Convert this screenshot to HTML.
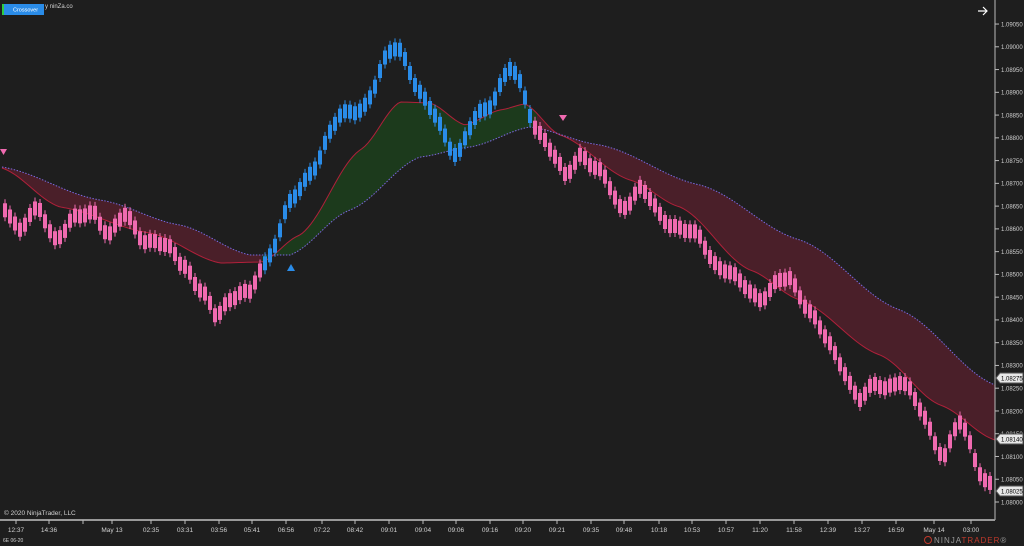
<!DOCTYPE html><html><head><style>
body{margin:0;background:#1e1e1e;width:1024px;height:546px;overflow:hidden;font-family:"Liberation Sans",sans-serif}
svg{position:absolute;left:0;top:0}
text{font-family:"Liberation Sans",sans-serif;font-size:6.5px;fill:#d0d0d0}
</style></head><body>
<svg id="s" width="1024" height="546" xmlns="http://www.w3.org/2000/svg">
<rect width="1024" height="546" fill="#1e1e1e"/>
<defs>
<clipPath id="g"><rect x="262" y="0" width="275" height="520"/></clipPath>
</defs>
<g id="bands"></g>
<g id="bars"></g>
<polygon points="0,149 7,149 3.5,155" fill="#f06ab0"/>
<polygon points="287,271 295,271 291,264" fill="#2a8ce8"/>
<polygon points="559,115 567,115 563,121" fill="#f06ab0"/>
<line x1="995" y1="0" x2="995" y2="520" stroke="#bbb" stroke-width="1"/>
<line x1="0" y1="520" x2="995" y2="520" stroke="#999" stroke-width="2"/>
<g id="axis"></g>
<rect x="2" y="4" width="2" height="11" fill="#2ecc40"/>
<rect x="4" y="4" width="40" height="11" fill="#2a8ce8"/>
<text x="13" y="11.5" style="font-size:5.5px;fill:#fff">Crossover</text>
<text x="45" y="8" style="font-size:6px">y ninZa.co</text>
<text x="4" y="515" style="font-size:6.5px">© 2020 NinjaTrader, LLC</text>
<text x="3" y="542" style="font-size:5px">6E 06-20</text>
<text x="934" y="543" style="font-size:8px;fill:#999;letter-spacing:1px">NINJA<tspan fill="#c0392b">TRADER</tspan>®</text>
<circle cx="928" cy="540" r="3.5" fill="none" stroke="#c0392b" stroke-width="1"/>
<path d="M978 11 H987 M983 7 L987 11 L983 15" stroke="#fff" stroke-width="1.2" fill="none"/>
</svg>
<script>
var NS="http://www.w3.org/2000/svg",s=document.getElementById('s');
function el(p,t,a){var e=document.createElementNS(NS,t);for(var k in a)e.setAttribute(k,a[k]);p.appendChild(e);return e;}
function interp(pts,x){for(var i=0;i<pts.length-1;i++){if(x>=pts[i][0]&&x<=pts[i+1][0]){var t=(x-pts[i][0])/(pts[i+1][0]-pts[i][0]);t=(1-Math.cos(t*Math.PI))/2*0.5+t*0.5;return pts[i][1]+t*(pts[i+1][1]-pts[i][1]);}}return pts[pts.length-1][1];}
function ps(pts){var r=[];for(var x=2;x<=995;x+=3)r.push([x,interp(pts,x)]);return r;}
var slow=[[2,167],[100,200],[180,225],[250,255],[290,255],[350,210],[420,157],[470,147],[530,127],[600,145],[700,185],[800,240],[900,310],[995,385]];
var fast=[[2,168],[60,207],[150,233],[220,263],[262,262],[300,235],[360,150],[400,102],[430,103],[465,125],[500,110],[525,104],[560,135],[630,180],[680,207],[750,270],[800,300],[880,355],[940,405],[995,440]];
var S=ps(slow),F=ps(fast),b=document.getElementById('bands');
var poly=S.concat(F.slice().reverse()).map(function(p){return p.join(',')}).join(' ');
el(b,'polygon',{points:poly,fill:'#4a1f29'});
el(b,'polygon',{points:poly,fill:'#1c3a1c','clip-path':'url(#g)'});
el(b,'polyline',{points:F.map(function(p){return p.join(',')}).join(' '),fill:'none',stroke:'#b0203a','stroke-width':1});
el(b,'polyline',{points:S.map(function(p){return p.join(',')}).join(' '),fill:'none',stroke:'#7a6ae0','stroke-width':1,'stroke-dasharray':'1.5,1.5'});
var wp=[[5,205],[20,228],[40,212],[55,235],[75,222],[95,210],[110,235],[125,218],[150,240],[170,252],[185,262],[200,290],[215,318],[228,298],[240,290],[250,298],[262,268],[290,205],[340,120],[362,105],[398,45],[430,112],[458,152],[480,115],[510,70],[540,130],[565,178],[582,150],[600,175],[620,205],[640,190],[660,215],[700,240],[720,265],[740,285],[760,295],[790,280],[840,360],[860,400],[880,385],[900,380],[920,410],[945,455],[960,425],[990,485]];
var g=document.getElementById('bars');
for(var x=5;x<=990;x+=5){var y=interp(wp,x)+5*Math.sin(x/7)+2*Math.sin(x/3.1);var c=(x>=262&&x<=532)?'#2a8ce8':'#f06ab0';
el(g,'line',{x1:x,y1:y-11,x2:x,y2:y+11,stroke:c,'stroke-width':1});
el(g,'rect',{x:x-2,y:y-7,width:4,height:14,fill:c});}
var a=document.getElementById('axis');
for(var i=0;i<=21;i++){var p=1.08+i*0.0005,y=502-i*22.76;el(a,'line',{x1:995,y1:y,x2:999,y2:y,stroke:'#bbb'});var t=el(a,'text',{x:1001,y:y+2.3,style:'font-size:6px'});t.textContent=p.toFixed(5);}
[[378,'1.08275'],[439,'1.08140'],[491,'1.08025']].forEach(function(q){el(a,'polygon',{points:'996,'+q[0]+' 1000,'+(q[0]-5)+' 1023,'+(q[0]-5)+' 1023,'+(q[0]+5)+' 1000,'+(q[0]+5),fill:'#e8e8e8',stroke:'#555'});var t=el(a,'text',{x:1001,y:q[0]+2.3,style:'fill:#000;font-size:6px'});t.textContent=q[1];});
[[16,'12:37'],[49,'14:36'],[83,''],[112,'May 13'],[151,'02:35'],[185,'03:31'],[219,'03:56'],[252,'05:41'],[286,'06:56'],[322,'07:22'],[355,'08:42'],[389,'09:01'],[423,'09:04'],[456,'09:06'],[490,'09:16'],[523,'09:20'],[557,'09:21'],[591,'09:35'],[624,'09:48'],[659,'10:18'],[692,'10:53'],[726,'10:57'],[760,'11:20'],[794,'11:58'],[828,'12:39'],[862,'13:27'],[896,'16:59'],[934,'May 14'],[971,'03:00']].forEach(function(q){el(a,'line',{x1:q[0],y1:520,x2:q[0],y2:524,stroke:'#bbb'});if(q[1]){var t=el(a,'text',{x:q[0],y:532,'text-anchor':'middle'});t.textContent=q[1];}});
</script>
</body></html>
